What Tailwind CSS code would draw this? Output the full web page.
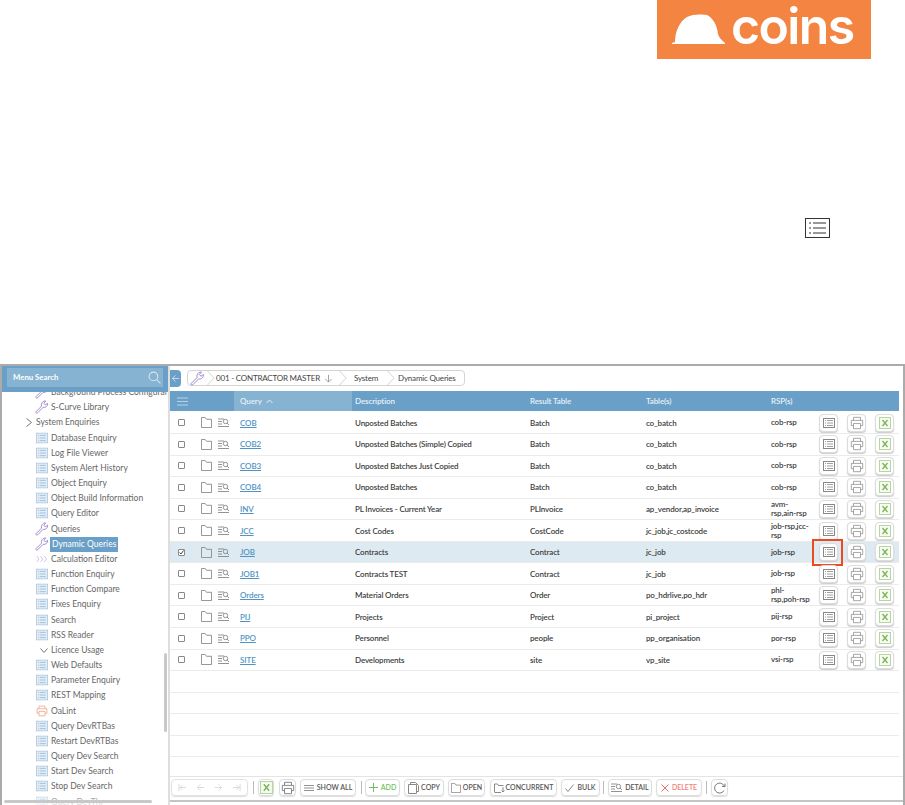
<!DOCTYPE html>
<html lang="en">
<head>
	<meta charset="UTF-8" />
	<title>Dynamic Queries</title>
	<script src="https://cdn.jsdelivr.net/npm/@tailwindcss/browser@4"></script>
</head>
<body class="bg-white font-['Lato',sans-serif] text-[#4a4a4a] w-[905px] h-[805px] overflow-hidden">
	<svg class="hidden">
		<symbol id="menu" viewBox="0 0 16 14"><rect x=".5" y=".5" width="15" height="13" fill="#e3edf6" stroke="#a6c4df"/><path d="M3 3.5h1M5 3.5h8M3 7h1M5 7h8M3 10.5h1M5 10.5h8" stroke="#8db2d4"/></symbol>
		<symbol id="wrench" viewBox="0 0 16 16"><path d="M1 13.500l6.500-6.500c-.8-2.500.8-5.500 3.800-6l1 .1-2.200 2.500 1.500 2 2.800-1.800c.4 3-2.300 5.300-5.200 4.600l-6 6.100c-1.200.9-2.900-.3-2.200-1z" fill="none" stroke="#9b80cb" stroke-width="1"/></symbol>
		<symbol id="chev3" viewBox="0 0 16 10"><path d="M1 1l3 4-3 4M6 1l3 4-3 4M11 1l3 4-3 4" fill="none" stroke="#c9aee6"/></symbol>
		<symbol id="print" viewBox="0 0 16 16"><path d="M4 5V1.500h8V5M4 11H1.500V5h13v6H12M4 8.500h8v6H4z" fill="none" stroke="currentColor"/></symbol>
		<symbol id="folder" viewBox="0 0 12 12"><path d="M.5 11.500V.5h4l1.500 2h5.500v9z" fill="none" stroke="#8a8a8a"/></symbol>
		<symbol id="detail" viewBox="0 0 11 9"><path d="M0 1h6M0 3.500h4M0 6h4M0 8.500h11" stroke="#777" stroke-width=".8" fill="none"/><circle cx="7.500" cy="3.500" r="2.200" fill="none" stroke="#777" stroke-width=".8"/><path d="M9 5l2 2" stroke="#777" stroke-width=".8"/></symbol>
		<symbol id="list" viewBox="0 0 12 10"><rect x=".5" y=".5" width="11" height="9" fill="#fff" stroke="#888"/><path d="M2 2.500h1M4 2.500h6M2 5h1M4 5h6M2 7.500h1M4 7.500h6" stroke="#888" stroke-width=".8"/></symbol>
		<symbol id="excel" viewBox="0 0 12 12"><rect x=".5" y=".5" width="11" height="11" fill="#f7fbf3" stroke="#b5d69d"/><path d="M3.500 3l5 6M8.500 3l-5 6" stroke="#7ab555" stroke-width="1.300"/></symbol>
		<symbol id="back" viewBox="0 0 10 10"><path d="M9 5H1.500M5 1.500L1.500 5 5 8.500" fill="none" stroke="currentColor"/></symbol>
		<symbol id="fwd" viewBox="0 0 10 10"><path d="M1 5h7.500M5 1.500L8.500 5 5 8.500" fill="none" stroke="currentColor"/></symbol>
		<symbol id="crumb" viewBox="0 0 9 17"><path d="M0 0l8 8.500L0 17" fill="none" stroke="#cfcfcf"/></symbol>
	</svg>

	<header class="flex justify-end pr-[34px]">
		<div class="w-[214px] h-[59px] bg-[#f48442] flex items-start pl-[15px]">
			<svg class="w-[53px] h-[31px] mt-[14px] shrink-0" viewBox="0 0 53 31"><path d="M0 29l3-1C3 18 7 8 15 3c5-3 15-3 20-2 6 3 10 10 11 19 1 4 4 6 7 9v1H0z" fill="#fff"/></svg>
			<span class="ml-[6px] mt-px font-['Inter',sans-serif] text-[50px] leading-none font-semibold tracking-[-1.600px] text-white">coins</span>
		</div>
	</header>

	<div class="flex justify-end pr-[75px] mt-[159px]">
		<svg class="w-[25px] h-[20px]" viewBox="0 0 25 20"><rect x=".5" y=".5" width="24" height="19" fill="#fff" stroke="#333"/><path d="M4 5h2M8 5h13M4 10h2M8 10h13M4 15h2M8 15h13" stroke="#333"/></svg>
	</div>

	<main class="mt-[126px] h-[441px] border-t-2 border-l-2 border-r-2 border-[#ababab] flex overflow-hidden">
		<aside class="relative w-[168px] shrink-0 border-r-2 border-[#dedede] flex flex-col overflow-hidden">
			<div class="relative z-10 h-[26px] shrink-0 bg-[#6aa0c7] pl-[5px] pr-[5px] pt-[2px]">
				<div class="h-[19px] bg-[#85b3d1] flex items-center justify-between pl-[6px] pr-[2px] text-[7.800px] font-bold text-white">
					<span>Menu Search</span>
					<svg class="w-[13px] h-[13px]" viewBox="0 0 12 12"><circle cx="5" cy="5" r="4" fill="none" stroke="#d5e5f0"/><path d="M8 8l3.500 3.500" stroke="#d5e5f0"/></svg>
				</div>
			</div>
			<div id="menuList" class="-mt-[7px] text-[8.500px] text-[#666]"></div>
			<div class="absolute left-[162px] top-[287px] w-[3px] h-[79px] bg-[#c8c8c8] rounded-full"></div>
			<div class="absolute left-0 bottom-0 w-full h-[14px] bg-gradient-to-b from-white/0 to-white/80"></div>
			<div class="absolute left-[2px] right-[16px] bottom-[2px] h-[3px] bg-[#c8c8c8] rounded-full"></div>
		</aside>

		<section class="flex-1 min-w-0 flex flex-col">
			<div class="h-[25px] shrink-0 flex items-start pt-[4px] relative">
				<button class="w-[11px] h-[17px] bg-[#6aa0c7] text-[#cfe1ee] rounded-r-sm flex items-center justify-center">
					<svg class="w-[9px] h-[9px]"><use href="#back"/></svg>
				</button>
				<nav class="ml-[6px] h-[16px] flex items-center border border-[#d5d5d5] rounded-sm text-[8px] tracking-[-.200px] text-[#444] bg-white">
					<svg class="w-[15px] h-[15px] ml-[2px]"><use href="#wrench"/></svg>
					<svg class="w-[8px] h-[16px] ml-[2px]"><use href="#crumb"/></svg>
					<span class="ml-px">001 - CONTRACTOR MASTER</span>
					<svg class="w-[9px] h-[9px] ml-[4px] text-[#999]" viewBox="0 0 10 10"><path d="M5 1v8M1.500 5.500L5 9l3.500-3.500" fill="none" stroke="currentColor"/></svg>
					<svg class="w-[8px] h-[16px] ml-[6px]"><use href="#crumb"/></svg>
					<span class="ml-[7px]">System</span>
					<svg class="w-[8px] h-[16px] ml-[9px]"><use href="#crumb"/></svg>
					<span class="ml-[3px] pr-[8px]">Dynamic Queries</span>
				</nav>
			</div>

			<div class="w-[729px] h-[20px] shrink-0 bg-[#6aa0c7] grid grid-cols-[64px_118px_178px_116px_125px_1fr] items-center text-[8px] font-semibold tracking-[-.100px] text-[#e6f0f6]">
				<span class="pl-[7px]"><svg class="w-[11px] h-[9px]" viewBox="0 0 11 9"><path d="M0 1h11M0 4.500h11M0 8h11" stroke="#b5d2e4"/></svg></span>
				<span class="bg-[#86b3d1] h-full flex items-center pl-[6px]">Query <svg class="w-[7px] h-[5px] ml-[4px]" viewBox="0 0 7 5"><path d="M.5 4L3.500 1l3 3" fill="none" stroke="#e6f0f6"/></svg></span>
				<span class="pl-[3px]">Description</span>
				<span>Result Table</span>
				<span>Table(s)</span>
				<span>RSP(s)</span>
			</div>
			<div id="rows" class="w-[729px] relative flex-1 min-h-0 overflow-hidden pt-[1.500px]"></div>

			<footer class="mb-[3px] h-[26px] shrink-0 border-t border-[#e4e4e4] border-b-2 border-b-[#c4c4c4] flex items-start pt-[2px] pl-[1px] text-[7px] font-semibold text-[#555]">
				<div class="w-[77px] h-[17px] flex items-center justify-around px-[2px] border border-[#e2e2e2] rounded-sm text-[#d8d8d8] shadow-[0_1px_1px_#ddd]">
					<svg class="w-[9px] h-[9px]" viewBox="0 0 10 10"><path d="M1 1v8M9 5H2M5 2L2 5l3 3" fill="none" stroke="currentColor"/></svg>
					<svg class="w-[9px] h-[9px]"><use href="#back"/></svg>
					<svg class="w-[9px] h-[9px]"><use href="#fwd"/></svg>
					<svg class="w-[9px] h-[9px]" viewBox="0 0 10 10"><path d="M9 1v8M1 5h7M5 2l3 3-3 3" fill="none" stroke="currentColor"/></svg>
				</div>
				<i class="w-px h-[13px] mt-[2px] bg-[#bbb] ml-[5px] mr-[4px]"></i>
				<button class="w-[16px] h-[17px] flex items-center justify-center border border-[#ddd] rounded-sm shadow-[0_1px_1px_#ddd]"><svg class="w-[13px] h-[13px]"><use href="#excel"/></svg></button>
				<button class="ml-[5px] w-[17px] h-[17px] flex items-center justify-center border border-[#ddd] rounded-sm text-[#777] shadow-[0_1px_1px_#ddd]"><svg class="w-[14px] h-[14px]"><use href="#print"/></svg></button>
				<button class="ml-[4px] w-[56px] h-[17px] flex items-center justify-center gap-[3px] border border-[#ddd] rounded-sm shadow-[0_1px_1px_#ddd]"><svg class="w-[10px] h-[8px]" viewBox="0 0 10 8"><path d="M0 1.500h10M0 4h10M0 6.500h10" stroke="#777" stroke-width=".8"/></svg>SHOW ALL</button>
				<i class="w-px h-[13px] mt-[2px] bg-[#bbb] ml-[5px] mr-[3px]"></i>
				<button class="w-[35px] h-[17px] flex items-center justify-center gap-[3px] border border-[#ddd] rounded-sm text-[#6fbf62] shadow-[0_1px_1px_#ddd]"><svg class="w-[9px] h-[9px]" viewBox="0 0 9 9"><path d="M4.500 0v9M0 4.500h9" stroke="#6fbf62"/></svg>ADD</button>
				<button class="ml-[4px] w-[40px] h-[17px] flex items-center justify-center gap-[2px] border border-[#ddd] rounded-sm shadow-[0_1px_1px_#ddd]"><svg class="w-[11px] h-[12px]" viewBox="0 0 11 12"><path d="M2.500 2.500v-2h5l3 3v6h-2M.5 2.500h8v9h-8z" fill="none" stroke="#888"/></svg>COPY</button>
				<button class="ml-[4px] w-[37px] h-[17px] flex items-center justify-center gap-[2px] border border-[#ddd] rounded-sm shadow-[0_1px_1px_#ddd]"><svg class="w-[10px] h-[10px]"><use href="#folder"/></svg>OPEN</button>
				<button class="ml-[5px] w-[67px] h-[17px] flex items-center justify-center gap-[1px] border border-[#ddd] rounded-sm shadow-[0_1px_1px_#ddd]"><svg class="w-[11px] h-[10px]" viewBox="0 0 11 10"><path d="M.5 9V1h3l1 1.500h5M7 9.500H.5M9 4v5M7.500 7.500L9 9l1.500-1.500" fill="none" stroke="#888"/></svg>CONCURRENT</button>
				<button class="ml-[4px] w-[39px] h-[17px] flex items-center justify-center gap-[3px] border border-[#ddd] rounded-sm shadow-[0_1px_1px_#ddd]"><svg class="w-[9px] h-[8px]" viewBox="0 0 9 8"><path d="M.5 4.500L3 7.500 8.500.5" fill="none" stroke="#888"/></svg>BULK</button>
				<i class="w-px h-[13px] mt-[2px] bg-[#bbb] ml-[3px] mr-[4px]"></i>
				<button class="w-[44px] h-[17px] flex items-center justify-center gap-[3px] border border-[#ddd] rounded-sm shadow-[0_1px_1px_#ddd]"><svg class="w-[11px] h-[9px]"><use href="#detail"/></svg>DETAIL</button>
				<button class="ml-[4px] w-[46px] h-[17px] flex items-center justify-center gap-[3px] border border-[#ddd] rounded-sm text-[#f0807a] shadow-[0_1px_1px_#ddd]"><svg class="w-[8px] h-[8px]" viewBox="0 0 8 8"><path d="M.5.5l7 7M7.500.5l-7 7" stroke="#ef6f66"/></svg>DELETE</button>
				<i class="w-px h-[13px] mt-[2px] bg-[#bbb] ml-[4px] mr-[4px]"></i>
				<button class="w-[17px] h-[17px] flex items-center justify-center border border-[#ddd] rounded-sm shadow-[0_1px_1px_#ddd]"><svg class="w-[12px] h-[12px]" viewBox="0 0 12 12"><path d="M10 8.500A5 5 0 1 1 8.500 2L11 4.500M11 1.500v3H8" fill="none" stroke="#777"/></svg></button>
			</footer>
		</section>
	</main>

	<script>
	const menu = [
		["wrench", "Background Process Configural"], ["wrench", "S-Curve Library"], ["open", "System Enquiries"],
		["menu", "Database Enquiry"], ["menu", "Log File Viewer"], ["menu", "System Alert History"],
		["menu", "Object Enquiry"], ["menu", "Object Build Information"], ["menu", "Query Editor"],
		["wrench", "Queries"], ["wrench", "Dynamic Queries"], ["chev3", "Calculation Editor"],
		["menu", "Function Enquiry"], ["menu", "Function Compare"], ["menu", "Fixes Enquiry"],
		["menu", "Search"], ["menu", "RSS Reader"], ["down", "Licence Usage"],
		["menu", "Web Defaults"], ["menu", "Parameter Enquiry"], ["menu", "REST Mapping"],
		["print", "OaLint"], ["menu", "Query DevRTBas"], ["menu", "Restart DevRTBas"],
		["menu", "Query Dev Search"], ["menu", "Start Dev Search"], ["menu", "Stop Dev Search"],
		["menu", "Query DevThr"]
	];

	const rows = [
		["COB", "Unposted Batches", "Batch", "co_batch", "cob-rsp"],
		["COB2", "Unposted Batches (Simple) Copied", "Batch", "co_batch", "cob-rsp"],
		["COB3", "Unposted Batches Just Copied", "Batch", "co_batch", "cob-rsp"],
		["COB4", "Unposted Batches", "Batch", "co_batch", "cob-rsp"],
		["INV", "PL Invoices - Current Year", "PLInvoice", "ap_vendor,ap_invoice", "avm-<br>rsp,ain-rsp"],
		["JCC", "Cost Codes", "CostCode", "jc_job,jc_costcode", "job-rsp,jcc-<br>rsp"],
		["JOB", "Contracts", "Contract", "jc_job", "job-rsp"],
		["JOB1", "Contracts TEST", "Contract", "jc_job", "job-rsp"],
		["Orders", "Material Orders", "Order", "po_hdrlive,po_hdr", "phl-<br>rsp,poh-rsp"],
		["PIJ", "Projects", "Project", "pi_project", "pij-rsp"],
		["PPO", "Personnel", "people", "pp_organisation", "por-rsp"],
		["SITE", "Developments", "site", "vp_site", "vsi-rsp"]
	];

	function menuIcon(kind) {
		if (kind === "open") return `<svg class="absolute left-[24px] top-[3px] w-[6px] h-[9px]" viewBox="0 0 6 9"><path d="M.5.5l5 4-5 4" fill="none" stroke="#777"/></svg>`;
		if (kind === "down") return `<svg class="absolute left-[38px] top-[5px] w-[8px] h-[5px]" viewBox="0 0 8 5"><path d="M.5.5l3.500 4 3.500-4" fill="none" stroke="#777"/></svg>`;
		const cls = kind === "print" ? "text-[#e9a27c]" : "";
		const size = kind === "wrench" ? "left-[33px] top-0 w-[14px] h-[14px]" : "left-[34px] top-[1px] w-[12px] h-[12px]";
		return `<svg class="absolute ${size} ${cls}"><use href="#${kind}"/></svg>`;
	}

	document.getElementById("menuList").innerHTML = menu.map(([kind, label]) => {
		const selected = label === "Dynamic Queries";
		const left = kind === "open" ? "ml-[34px]" : "ml-[49px]";
		const text = selected ? "bg-[#6aa0c7] text-white px-[2px] -ml-px" : "";
		return `<div class="relative h-[15.180px] leading-[15.180px] whitespace-nowrap">${menuIcon(kind)}<span class="block w-fit ${left}"><span class="block ${text}">${label}</span></span></div>`;
	}).join("");

	const cell = "w-[19px] h-[18px] bg-white border border-[#dcdcdc] rounded-sm shadow-[0_1px_1px_#ccc] flex items-center justify-center";

	let html = rows.map(([query, desc, result, tables, rsp]) => {
		const picked = query === "JOB";
		return `<div class="relative h-[21.550px] border-b border-[#ebebeb] grid grid-cols-[64px_118px_178px_116px_125px_1fr] items-center text-[8px] font-semibold tracking-[-.150px] text-[#3d3d3d] ${picked ? "bg-[#deeaf1]" : ""}">
			<div class="flex items-center">
				<span class="ml-[8px] w-[7px] h-[7px] border border-[#888] rounded-[1px] bg-white flex items-center justify-center">${picked ? `<svg class="w-[5px] h-[5px]" viewBox="0 0 5 5"><path d="M.5 2.500L2 4 4.500.5" fill="none" stroke="#444"/></svg>` : ""}</span>
				<svg class="ml-[16px] w-[11px] h-[11px]"><use href="#folder"/></svg>
				<svg class="ml-[6px] w-[11px] h-[9px]"><use href="#detail"/></svg>
			</div>
			<a class="pl-[6px] text-[#4f94c4] underline underline-offset-1 tracking-[-.100px]">${query}</a>
			<span class="pl-[3px] whitespace-nowrap">${desc}</span>
			<span>${result}</span>
			<span>${tables}</span>
			<div class="flex items-center">
				<span class="w-[48px] leading-[9px]">${rsp}</span>
				<div class="${cell}"><svg class="w-[12px] h-[10px]"><use href="#list"/></svg></div>
				<div class="${cell} ml-[9px] text-[#999]"><svg class="w-[14px] h-[14px]"><use href="#print"/></svg></div>
				<div class="${cell} ml-[9px]"><svg class="w-[12px] h-[12px]"><use href="#excel"/></svg></div>
			</div>
			${picked ? `<div class="absolute left-[642px] top-[-3px] w-[31px] h-[27px] border-2 border-[#ee4a22]"></div>` : ""}
		</div>`;
	}).join("");
	for (let i = 0; i < 5; i++) html += `<div class="h-[21.550px] border-b border-[#ebebeb]"></div>`;
	document.getElementById("rows").innerHTML = html;
	</script>
</body>
</html>
